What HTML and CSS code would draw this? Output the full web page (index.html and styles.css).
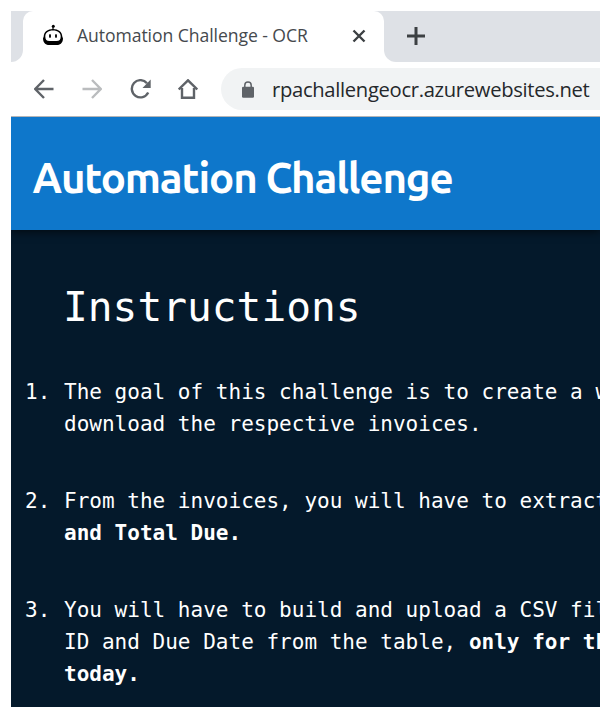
FILE: index.html
```html
<!DOCTYPE html>
<html lang="en">
<head>
<meta charset="utf-8">
<title>Automation Challenge - OCR</title>
<link rel="stylesheet" href="styles.css">
</head>
<body>
<div class="window">
  <div class="tab-strip">
    <div class="strip-edge"></div>
    <div class="tab">
      <svg class="favicon" width="22" height="22" viewBox="0 0 22 22">
        <path d="M11 6V2.500" stroke="#000" stroke-width="1.200"/>
        <circle cx="11.300" cy="2.200" r="1.500"/>
        <path fill-rule="evenodd" d="M11 5C16.500 5 20 7.800 20.300 12.500L21 14.500C20.800 19.500 17.500 21 15 21H7C4.500 21 1.200 19.500 1 14.500L1.700 12.500C2 7.800 5.500 5 11 5ZM11 6.600C6 6.600 3.300 9 3.300 12.400C3.300 15.300 4.500 17 7.500 17H14.500C17.500 17 18.700 15.300 18.700 12.400C18.700 9 16 6.600 11 6.600Z"/>
        <ellipse cx="8" cy="12" rx="1" ry="2"/>
        <ellipse cx="14" cy="12" rx="1" ry="2"/>
      </svg>
      <span class="tab-title">Automation Challenge - OCR</span>
      <svg class="close" width="14" height="14" viewBox="0 0 14 14"><path d="M1.500 1.500L12.500 12.500M12.500 1.500L1.500 12.500"/></svg>
    </div>
    <div class="strip-rest">
      <svg class="plus" width="18" height="18" viewBox="0 0 18 18"><path d="M9 0V18M0 9H18"/></svg>
    </div>
  </div>
  <div class="toolbar">
    <svg class="nav" width="20" height="20" viewBox="0 0 20 20"><path d="M19.500 10H1.500M10 1L1.200 10L10 19"/></svg>
    <svg class="nav disabled" width="20" height="20" viewBox="0 0 20 20"><path d="M.500 10H18.500M10 1L18.800 10L10 19"/></svg>
    <svg class="nav reload" width="22" height="20" viewBox="0 0 22 20"><path d="M17 4.200A8.600 8.600 0 1 0 18.200 13.500"/><path class="solid" d="M20.700 .500V9H12.500Z"/></svg>
    <svg class="nav" width="20" height="20" viewBox="0 0 20 20"><path d="M4 9V18.800H16V9M.700 10.500L10 1.300L19.300 10.500"/></svg>
    <div class="address">
      <svg class="lock" width="12" height="17" viewBox="0 0 12 17"><path d="M2.800 7V4.200A3.200 3.200 0 0 1 9.200 4.200V7" fill="none" stroke="#5f6368" stroke-width="1.500"/><rect y="5.700" width="12" height="11" rx="1.300" fill="#5f6368"/></svg>
      <span class="url">rpachallengeocr.azurewebsites.net</span>
    </div>
  </div>
  <div class="site">
    <header class="banner"><h1>Automation Challenge</h1></header>
    <main class="page">
      <h2>Instructions</h2>
      <ol>
        <li><span class="num">1.</span><p>The goal of this challenge is to create a w<br>download the respective invoices.</p></li>
        <li><span class="num">2.</span><p>From the invoices, you will have to extract<br><b>and Total Due.</b></p></li>
        <li><span class="num">3.</span><p>You will have to build and upload a CSV fil<br>ID and Due Date from the table, <b>only for th</b><br><b>today.</b></p></li>
      </ol>
    </main>
  </div>
</div>
</body>
</html>
```
FILE: styles.css
```css
* { box-sizing: border-box; }
body { margin: 0; background: #fff; overflow: hidden; }
.window {
  width: 600px;
  height: 707px;
  padding: 11px 0 0 11px;
  overflow: hidden;
  display: flex;
  flex-direction: column;
}
svg { display: block; flex: none; }

/* browser tabs */
.tab-strip {
  display: flex;
  height: 51px;
  flex: none;
  background: linear-gradient(#dee1e6, #dee1e6) 0 0 / 24px 20px no-repeat, linear-gradient(#dee1e6, #dee1e6) 348px 0 / 40px 20px no-repeat, #fff;
}
.strip-edge { width: 12px; background: #dee1e6; border-radius: 0 0 12px 0; }
.tab {
  width: 361px;
  display: flex;
  align-items: center;
  background: #fff;
  border-radius: 10px 10px 0 0;
  padding-left: 19px;
}
.favicon { margin-top: -3px; }
.tab-title {
  width: 231px;
  margin: -3px 0 0 13px;
  font: 17.6px/24px "Open Sans", sans-serif;
  letter-spacing: -0.07px;
  color: #45494d;
  white-space: nowrap;
}
.close { margin: -1px 0 0 44px; fill: none; stroke: #3c4043; stroke-width: 2.4; }
.strip-rest { flex: 1; background: #dee1e6; border-radius: 0 0 0 12px; padding: 16px 0 0 23px; }
.plus { fill: none; stroke: #3c4043; stroke-width: 3; }

/* navigation row */
.toolbar {
  flex: none;
  height: 55px;
  padding: 6px 0 7px 23px;
  display: flex;
  align-items: center;
}
.nav { margin-right: 28px; fill: none; stroke: #5f6368; stroke-width: 2.4; }
.nav.disabled { stroke: #babcbe; }
.nav.reload { margin-right: 26px; }
.nav .solid { fill: #5f6368; stroke: none; }
.nav:nth-of-type(4) { margin-right: 23px; }
.address {
  flex: 1;
  height: 42px;
  padding-left: 21px;
  display: flex;
  align-items: center;
  background: #f1f3f4;
  border-radius: 21px 0 0 21px;
}
.url {
  margin-left: 18px;
  font: 20.2px/30px "Open Sans", sans-serif;
  letter-spacing: -0.31px;
  color: #25282b;
  white-space: nowrap;
}

/* page */
.site {
  flex: 1;
  display: flex;
  flex-direction: column;
  overflow: hidden;
  margin-top: -1px;
  border-top: 1px solid #b4b5b7;
}
.banner {
  position: relative;
  flex: none;
  height: 113px;
  padding: 31px 0 0 21.5px;
  background: #0e77cb;
  box-shadow: 0 2px 8px rgba(0, 0, 0, .6);
}
h1 {
  margin: 0;
  font: 600 42px/60px Ubuntu, "Noto Sans", sans-serif;
  letter-spacing: -1.14px;
  color: #fff;
  white-space: nowrap;
}
.page {
  flex: 1;
  padding: 47px 0 0 14px;
  background: #04192b;
  color: #fff;
  font: 21.03px/32px "DejaVu Sans Mono", monospace;
  overflow: hidden;
}
h2 { margin: 0 0 39px 38px; font-size: 41.2px; font-weight: 400; line-height: 60px; }
ol { margin: 0; padding: 0; list-style: none; display: grid; gap: 45px; }
li { display: flex; white-space: nowrap; }
.num { width: 39px; flex: none; }
p { margin: 0; }
```
